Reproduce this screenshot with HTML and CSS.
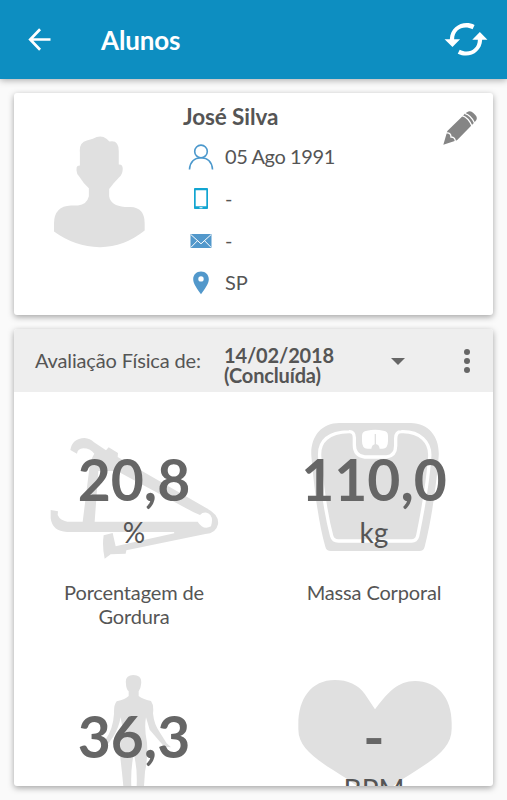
FILE: index.html
```html
<!DOCTYPE html>
<html lang="pt-BR">
<head>
    <meta charset="UTF-8">
    <meta name="viewport" content="width=device-width, initial-scale=1.0">
    <title>Alunos</title>
    <link rel="stylesheet" href="styles.css">
</head>
<body>
    <header class="toolbar">
        <svg class="icon-back" viewBox="0 0 24 24" fill="none" stroke="#fff" stroke-width="2.8">
            <path d="M12.6 1.3 2.3 12l10.3 10.7M2.3 12H23.5"/>
        </svg>
        <h1>Alunos</h1>
        <svg class="icon-sync" viewBox="0 0 132 100" fill="#fff">
            <path d="M92 6C61-10 19 8 17 49H1L25 73 48 49H30C30 19 59 5 86 19Z"/>
            <path d="M41 93C74 109 113 91 115 51H131L108 27 85 51H102C102 81 73 95 47 81Z"/>
        </svg>
    </header>

    <main class="content">
        <!-- Perfil do aluno -->
        <section class="card profile">
            <svg class="avatar" viewBox="0 0 274 336" fill="#e0e0e0">
                <path d="M78 88V49Q75 19 99 13L117 8Q141-6 158 8L167 16Q195 10 195 45V85Q207 84 207 98Q207 114 197 123Q181 139 166 159V181Q171 210 213 213H230Q274 214 273 264V284Q209 335 137 334Q63 333 0 287V262Q1 211 51 209H72Q99 206 105 181V157Q89 143 77 123Q66 112 68 98Q67 88 78 88Z"/>
            </svg>
            <div class="profile-info">
                <h2>José Silva</h2>
                <ul>
                    <li>
                        <svg width="26" height="26" viewBox="0 0 26 26" fill="none" stroke="#4b98cc" stroke-width="1.6">
                            <circle cx="13" cy="7.4" r="6.3"/>
                            <path d="M1.5 25.5C2 17.5 7 13.7 13 13.7S24 17.5 24.5 25.5"/>
                        </svg>
                        <span class="birth-date">05 Ago 1991</span>
                    </li>
                    <li>
                        <svg width="26" height="26" viewBox="0 0 26 26">
                            <path fill="#12a5d1" fill-rule="evenodd" d="M6.800 2H19.200Q20 2 20 3V22Q20 23 19.200 23H6.800Q6 23 6 22V3Q6 2 6.800 2ZM7.700 4.200V20.200H18.300V4.200ZM11.500 21.200V22.300H14.500V21.200Z"/>
                        </svg>
                        <span>-</span>
                    </li>
                    <li>
                        <svg width="26" height="26" viewBox="0 0 26 26">
                            <rect x="2.5" y="6" width="21" height="14" fill="#5298cb"/>
                            <path fill="none" stroke="#fff" stroke-width="1" d="M2.800 6.500 13 15.800 23.200 6.500M2.800 19.500 9.500 12.700M23.200 19.500 16.500 12.700"/>
                        </svg>
                        <span>-</span>
                    </li>
                    <li>
                        <svg width="26" height="26" viewBox="0 0 26 26">
                            <path fill="#5298cb" fill-rule="evenodd" d="M13 1.500C8.400 1.500 5.200 4.800 5.200 9.200C5.200 13.500 9 18.800 13 24.200C17 18.800 20.800 13.500 20.800 9.200C20.800 4.800 17.600 1.500 13 1.500ZM13 6.200A2.700 2.700 0 1 1 13 11.600A2.700 2.700 0 1 1 13 6.200Z"/>
                        </svg>
                        <span>SP</span>
                    </li>
                </ul>
            </div>
            <svg class="icon-edit" viewBox="0 0 102 102">
                <path fill="#858585" d="M1 101 13 60 60 14Q64 8 72 4Q82-3 91 6L97 12Q104 19 100 27Q96 34 86 43L42 88Z"/>
                <path fill="none" stroke="#fff" stroke-width="4" d="M10 66Q24 64 24 78Q38 78 37 94M57 14Q77 20 87 46M65 7Q85 13 95 37"/>
            </svg>
        </section>

        <!-- Avaliação física -->
        <section class="card assessment">
            <div class="assessment-header">
                <span class="assessment-label">Avaliação Física de:</span>
                <strong class="assessment-date">14/02/2018<br>(Concluída)</strong>
                <span class="caret"></span>
                <div class="menu-dots"><i></i><i></i><i></i></div>
            </div>

            <div class="metrics">
                <div class="metric">
                    <svg class="metric-art" viewBox="-48 -54 720 540" fill="#e0e0e0">
                        <path d="M121 120Q126 86 164 84Q180 85 192 97L228 121L236 112L264 129L263 141L530 295Q568 315 564 343Q558 371 526 372L289 421L287 431L242 433L224 446Q216 409 221 376L248 369L257 409L433 370L432 366H111Q67 364 62 325V300L84 304L83 315Q91 332 112 335H158L177 184Q181 148 193 131Q180 115 160 115Q143 116 141 131Z"/>
                        <path fill="#fff" d="M205 183 194 335H503Q520 362 543 349Q553 315 530 308Q518 306 510 315L491 307L261 183Z"/>
                    </svg>
                    <div class="metric-value">
                        <strong>20,8</strong>
                        <span>%</span>
                    </div>
                    <p>Porcentagem de Gordura</p>
                </div>

                <div class="metric">
                    <svg class="metric-art" viewBox="-79 -54 720 540">
                        <path fill="#e0e0e0" d="M177 39H391C449 39 479 86 475 139C470 210 454 331 433 410Q430 423 417 423H152Q138 423 135 410C112 332 99 207 93 137C90 80 123 39 177 39Z"/>
                        <path fill="none" stroke="#fff" stroke-width="10" stroke-linejoin="round" d="M206 65Q222 64 222 83V105Q222 137 253 141H318Q346 137 346 107V86Q346 65 363 65C419 63 452 97 448 142C443 212 426 310 412 378Q408 393 394 393H174Q158 393 154 378C134 303 123 204 118 139C115 92 145 67 206 65Z"/>
                        <path fill="#fff" d="M260 62Q284 57 309 62Q323 64 323 77V93Q323 116 307 116H298Q296 103 286 102Q275 103 273 116H261Q245 116 245 93V77Q245 64 260 62Z"/>
                        <path stroke="#e0e0e0" stroke-width="4" d="M285 72V108"/>
                    </svg>
                    <div class="metric-value">
                        <strong>110,0</strong>
                        <span>kg</span>
                    </div>
                    <p>Massa Corporal</p>
                </div>

                <div class="metric">
                    <svg class="metric-art" viewBox="42 -3 720 540" fill="#e0e0e0">
                        <path d="M400 75Q428 75 423 104Q422 116 416 124V138Q427 147 453 153Q462 165 459 190Q462 224 480 248L500 280L513 292L493 290L478 273L449 239L438 202Q432 234 441 278Q444 322 435 365L432 409H410Q412 361 405 330L402 308L398 330Q392 369 394 409H370Q366 365 361 324Q357 276 367 231L362 202Q356 234 341 258L324 282L311 289L318 266Q339 237 342 191Q341 165 350 154Q377 148 386 138V124Q378 116 378 101Q374 76 400 75Z"/>
                    </svg>
                    <div class="metric-value">
                        <strong>36,3</strong>
                    </div>
                </div>

                <div class="metric">
                    <svg class="metric-art" viewBox="-1 -3 720 540" fill="#e0e0e0">
                        <path d="M362 178 332 133C311 103 280 90 242 90C170 90 132 147 132 222V238C132 300 197 335 280 388L362 448L444 388C530 334 592 299 592 236V218C592 142 548 93 482 93C431 93 400 127 362 178Z"/>
                    </svg>
                    <div class="metric-value">
                        <strong>-</strong>
                        <span>BPM</span>
                    </div>
                </div>
            </div>
        </section>
    </main>
</body>
</html>
```
FILE: styles.css
```css
* {
    margin: 0;
    padding: 0;
    box-sizing: border-box;
}

body {
    height: 100vh;
    overflow: hidden;
    background-color: #fafafa;
    color: #555;
    font-family: Lato, "Open Sans", sans-serif;
    font-size: 20px;
    letter-spacing: -0.15px;
}

svg {
    display: block;
    flex-shrink: 0;
}

/* Toolbar */
.toolbar {
    display: flex;
    align-items: center;
    height: 79px;
    padding: 0 19px 0 28px;
    background-color: #0d8ec1;
    box-shadow: 0 1px 7px rgba(0, 0, 0, 0.35);
    color: #fff;
}

.toolbar h1 {
    flex: 1;
    margin-left: 50px;
    padding-top: 1px;
    font-size: 26px;
    line-height: 30px;
}

.icon-back {
    width: 23px;
    height: 23px;
}

.icon-sync {
    width: 44px;
    height: 33px;
}

.content {
    display: flex;
    flex-direction: column;
    gap: 14px;
    padding: 14px;
}

.card {
    background-color: #fff;
    border-radius: 3px;
    box-shadow: 0 2px 6px rgba(0, 0, 0, 0.35);
}

/* Profile */
.profile {
    display: flex;
    height: 222px;
    padding-left: 40px;
}

.avatar {
    width: 91px;
    height: 112px;
    margin-top: 43px;
}

.profile-info {
    flex: 1;
    margin-left: 38px;
    padding-top: 10px;
}

.profile-info h2 {
    color: #555;
    font-size: 22.5px;
    line-height: 28px;
    letter-spacing: -0.1px;
}

.profile-info ul {
    list-style: none;
    margin-top: 5px;
    padding-left: 5px;
}

.profile-info li {
    display: flex;
    align-items: center;
    gap: 11px;
    height: 42px;
}

.profile-info li span {
    padding-bottom: 2px;
}

.birth-date {
    letter-spacing: -0.4px;
}

.icon-edit {
    width: 34px;
    height: 34px;
    margin: 18px 16px 0 0;
}

/* Assessment */
.assessment {
    height: 457px;
    overflow: hidden;
}

.assessment-header {
    display: flex;
    align-items: center;
    height: 63px;
    padding: 0 23px 0 21px;
    background-color: #eee;
}

.assessment-label {
    width: 189px;
    padding-bottom: 2px;
}

.assessment-date {
    width: 167px;
    padding-top: 8px;
    line-height: 20px;
}

.caret {
    margin-top: 1px;
    border: 7px solid transparent;
    border-top-color: #666;
    border-bottom: 0;
}

.menu-dots {
    display: flex;
    flex-direction: column;
    gap: 3px;
    margin-left: auto;
}

.menu-dots i {
    width: 6px;
    height: 6px;
    border-radius: 50%;
    background-color: #666;
}

/* Metrics */
.metrics {
    display: grid;
    grid-template-columns: 1fr 1fr;
    grid-auto-rows: 257px;
}

.metric {
    display: grid;
    grid-template-columns: 240px;
    grid-template-rows: 180px auto;
    align-content: start;
    justify-content: center;
    text-align: center;
}

.metric-art,
.metric-value {
    grid-area: 1 / 1;
}

.metric-art {
    width: 240px;
    height: 180px;
}

.metric-value {
    padding-top: 59px;
    letter-spacing: 0;
}

.metric-value strong {
    display: block;
    color: #666;
    font-size: 57px;
    line-height: 56px;
}

.metric-value span {
    display: block;
    font-size: 28px;
    line-height: 50px;
}

.metric p {
    padding: 8px 35px 0;
    line-height: 24px;
}
```
